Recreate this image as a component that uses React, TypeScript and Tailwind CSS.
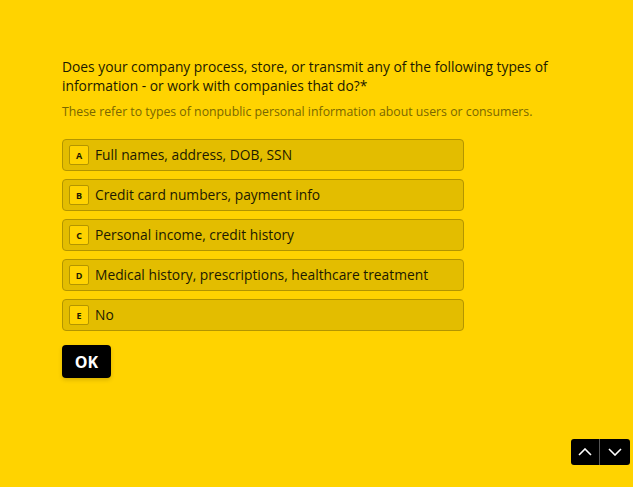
import React from "react";

const options = [
  { k: "A", t: "Full names, address, DOB, SSN" },
  { k: "B", t: "Credit card numbers, payment info" },
  { k: "C", t: "Personal income, credit history" },
  { k: "D", t: "Medical history, prescriptions, healthcare treatment" },
  { k: "E", t: "No" },
];

export default function App() {
  return (
    <div
      className="relative w-[633px] h-[487px] bg-[#FFD300] text-[#1c1a00] overflow-hidden"
      style={{ fontFamily: '"Open Sans", "Liberation Sans", sans-serif' }}
    >
      <div className="pl-[62px] pt-[57px] w-[580px]">
        <h1 className="text-[13.8px] leading-[19px] font-normal">
          Does your company process, store, or transmit any of the following types of information - or work with companies that do?*
        </h1>
        <p className="mt-[9px] text-[12.3px] leading-[16px] text-[#7a6700]">
          These refer to types of nonpublic personal information about users or consumers.
        </p>
        <div className="mt-[19px] flex flex-col gap-[8px] w-[402px]">
          {options.map((o) => (
            <div
              key={o.k}
              className="h-[32px] flex items-center pl-[6px] rounded-[4px] border border-[#b39500] bg-[#E3BD00]"
            >
              <span className="w-[20px] h-[20px] flex items-center justify-center border border-[#b39500] bg-[#FFD300] rounded-[2px] text-[9px] font-bold leading-none">
                {o.k}
              </span>
              <span className="ml-[6px] text-[13.8px] leading-[20px]">{o.t}</span>
            </div>
          ))}
        </div>
        <button className="mt-[14px] w-[49px] h-[33px] rounded-[4px] bg-black text-white text-[16px] font-bold shadow-[0_2px_4px_rgba(0,0,0,0.15)]">
          OK
        </button>
      </div>
      <div className="absolute left-[571px] top-[439px] flex rounded-[3px] overflow-hidden bg-black">
        <button className="w-[29px] h-[26px] flex items-center justify-center border-r border-[#555]">
          <svg width="14" height="8" viewBox="0 0 14 8" fill="none" stroke="white" strokeWidth="1.6">
            <path d="M1 7 L7 1 L13 7" />
          </svg>
        </button>
        <button className="w-[30px] h-[26px] flex items-center justify-center">
          <svg width="14" height="8" viewBox="0 0 14 8" fill="none" stroke="white" strokeWidth="1.6">
            <path d="M1 1 L7 7 L13 1" />
          </svg>
        </button>
      </div>
    </div>
  );
}
